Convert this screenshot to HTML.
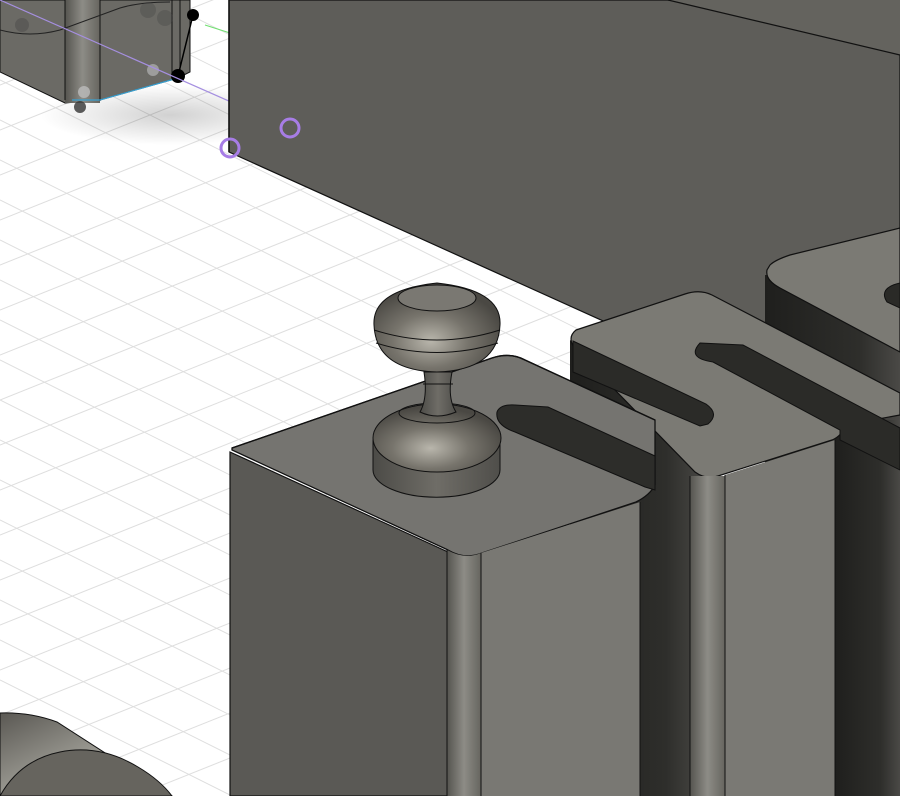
<!DOCTYPE html>
<html><head><meta charset="utf-8"><style>
html,body{margin:0;padding:0;background:#fff;width:900px;height:796px;overflow:hidden}
svg{display:block}
</style></head><body>
<svg width="900" height="796" viewBox="0 0 900 796" xmlns="http://www.w3.org/2000/svg">
<defs>
<linearGradient id="fil" x1="0" x2="1"><stop offset="0" stop-color="#55544f"/><stop offset=".5" stop-color="#8d8c86"/><stop offset="1" stop-color="#66655f"/></linearGradient>
<linearGradient id="dk" x1="0" x2="1"><stop offset="0" stop-color="#1f1f1d"/><stop offset=".7" stop-color="#2e2e2b"/><stop offset="1" stop-color="#4a4946"/></linearGradient>
<radialGradient id="ball" cx=".45" cy=".65" r=".6"><stop offset="0" stop-color="#b9b6ac"/><stop offset=".5" stop-color="#77746c"/><stop offset="1" stop-color="#4a4843"/></radialGradient>
<linearGradient id="cyl" x1="0" x2="1"><stop offset="0" stop-color="#4c4b47"/><stop offset=".5" stop-color="#6f6d67"/><stop offset="1" stop-color="#4f4e4a"/></linearGradient>
<linearGradient id="tube" x1="0" y1="0" x2="1" y2="1"><stop offset="0" stop-color="#5a5853"/><stop offset=".6" stop-color="#a7a69e"/><stop offset="1" stop-color="#66645e"/></linearGradient>
<radialGradient id="sh" cx=".5" cy=".5" r=".5"><stop offset="0" stop-color="#000" stop-opacity=".18"/><stop offset="1" stop-color="#000" stop-opacity="0"/></radialGradient>
</defs>
<rect width="900" height="796" fill="#fff"/>
<g stroke="#dedede" stroke-width="1">
<line x1="0" y1="-400" x2="900" y2="50"/><line x1="0" y1="-360" x2="900" y2="90"/><line x1="0" y1="-320" x2="900" y2="130"/><line x1="0" y1="-280" x2="900" y2="170"/><line x1="0" y1="-240" x2="900" y2="210"/><line x1="0" y1="-200" x2="900" y2="250"/><line x1="0" y1="-160" x2="900" y2="290"/><line x1="0" y1="-120" x2="900" y2="330"/><line x1="0" y1="-80" x2="900" y2="370"/><line x1="0" y1="-40" x2="900" y2="410"/><line x1="0" y1="0" x2="900" y2="450"/><line x1="0" y1="40" x2="900" y2="490"/><line x1="0" y1="80" x2="900" y2="530"/><line x1="0" y1="120" x2="900" y2="570"/><line x1="0" y1="160" x2="900" y2="610"/><line x1="0" y1="200" x2="900" y2="650"/><line x1="0" y1="240" x2="900" y2="690"/><line x1="0" y1="280" x2="900" y2="730"/><line x1="0" y1="320" x2="900" y2="770"/><line x1="0" y1="360" x2="900" y2="810"/><line x1="0" y1="400" x2="900" y2="850"/><line x1="0" y1="440" x2="900" y2="890"/><line x1="0" y1="480" x2="900" y2="930"/><line x1="0" y1="520" x2="900" y2="970"/><line x1="0" y1="560" x2="900" y2="1010"/><line x1="0" y1="600" x2="900" y2="1050"/><line x1="0" y1="640" x2="900" y2="1090"/><line x1="0" y1="680" x2="900" y2="1130"/><line x1="0" y1="720" x2="900" y2="1170"/><line x1="0" y1="760" x2="900" y2="1210"/>
<line x1="0" y1="40" x2="900" y2="-320"/><line x1="0" y1="85" x2="900" y2="-275"/><line x1="0" y1="130" x2="900" y2="-230"/><line x1="0" y1="175" x2="900" y2="-185"/><line x1="0" y1="220" x2="900" y2="-140"/><line x1="0" y1="265" x2="900" y2="-95"/><line x1="0" y1="310" x2="900" y2="-50"/><line x1="0" y1="355" x2="900" y2="-5"/><line x1="0" y1="400" x2="900" y2="40"/><line x1="0" y1="445" x2="900" y2="85"/><line x1="0" y1="490" x2="900" y2="130"/><line x1="0" y1="535" x2="900" y2="175"/><line x1="0" y1="580" x2="900" y2="220"/><line x1="0" y1="625" x2="900" y2="265"/><line x1="0" y1="670" x2="900" y2="310"/><line x1="0" y1="715" x2="900" y2="355"/><line x1="0" y1="760" x2="900" y2="400"/><line x1="0" y1="805" x2="900" y2="445"/><line x1="0" y1="850" x2="900" y2="490"/><line x1="0" y1="895" x2="900" y2="535"/><line x1="0" y1="940" x2="900" y2="580"/><line x1="0" y1="985" x2="900" y2="625"/><line x1="0" y1="1030" x2="900" y2="670"/><line x1="0" y1="1075" x2="900" y2="715"/><line x1="0" y1="1120" x2="900" y2="760"/><line x1="0" y1="1165" x2="900" y2="805"/>
</g>
<ellipse cx="170" cy="115" rx="130" ry="30" fill="url(#sh)"/>
<path d="M0 0 H190 V72 L178 78 L100 100 L65 103 L0 72 Z" fill="#6b6a65" stroke="#111" stroke-width="1"/>
<rect x="65" y="0" width="35" height="103" fill="url(#fil)"/>
<line x1="65" y1="0" x2="65" y2="100" stroke="#111"/><line x1="100" y1="0" x2="100" y2="101" stroke="#111"/>
<line x1="172" y1="0" x2="172" y2="78" stroke="#111"/><line x1="180" y1="0" x2="180" y2="76" stroke="#111"/>
<path d="M0 30 Q30 38 60 30 L120 8 Q140 2 170 2" fill="none" stroke="#222"/>
<path d="M72 100 L100 100 L178 78" fill="none" stroke="#3aa0d0" stroke-width="1.2"/>
<line x1="178" y1="76" x2="193" y2="15" stroke="#000" stroke-width="1.5"/>
<circle cx="178" cy="76" r="7" fill="#000"/><circle cx="193" cy="15" r="6" fill="#000"/>
<circle cx="153" cy="70" r="6" fill="#aaa" opacity=".8"/><circle cx="84" cy="92" r="6" fill="#bbb" opacity=".8"/>
<circle cx="80" cy="107" r="6" fill="#333" opacity=".8"/>
<circle cx="22" cy="25" r="7" fill="#444" opacity=".4"/><circle cx="148" cy="10" r="8" fill="#444" opacity=".35"/><circle cx="165" cy="18" r="8" fill="#444" opacity=".35"/>
<line x1="205" y1="25" x2="230" y2="33" stroke="#6fe06f"/>
<line x1="0" y1="0" x2="290" y2="128" stroke="#a58fe0" stroke-width="1.2"/>
<polygon points="229,0 900,0 900,455 229,152" fill="#5e5d59" stroke="#111" stroke-width="1.2"/>
<line x1="229" y1="0" x2="229" y2="152" stroke="#111" stroke-width="1.5"/>
<polygon points="668,0 900,0 900,55" fill="#64635e"/>
<line x1="668" y1="0" x2="900" y2="55" stroke="#111" stroke-width="1.2"/>
<circle cx="290" cy="128" r="9" fill="none" stroke="#a77de6" stroke-width="3"/>
<circle cx="230" cy="148" r="9" fill="none" stroke="#a77de6" stroke-width="3"/>
<polygon points="765,275 900,280 900,740 765,740" fill="url(#dk)"/>
<path d="M770,265 Q775,260 790,255 L900,228 V352 L780,288 Q765,280 767,270 Z" fill="#7b7a74" stroke="#111" stroke-width="1.2"/>
<path d="M900,283 Q878,288 887,302 L900,308 Z" fill="#2a2a27" stroke="#111"/>
<polygon points="840,740 900,740 900,796 870,796" fill="#fff"/>
<line x1="840" y1="790" x2="900" y2="765" stroke="#f08080"/>
<polygon points="570,340 707,477 707,796 570,796" fill="url(#dk)"/>
<rect x="835" y="420" width="65" height="376" fill="url(#dk)"/>
<path d="M576,330 L685,294 Q700,289 712,295 L900,393 V415 L845,425 Q842,436 832,440 L718,476 Q706,480 695,472 L576,350 Q566,338 576,330 Z" fill="#7b7a74" stroke="#111" stroke-width="1.2"/>
<path d="M573,341 L706,404 Q720,414 708,424 L700,426 L573,372 Z" fill="#2b2b28" stroke="#111"/>
<path d="M700,343 L743,345 L900,428 V470 L840,440 L840,430 L713,362 Q686,358 700,343 Z" fill="#2b2b28" stroke="#111"/>
<rect x="690" y="476" width="35" height="320" fill="url(#fil)"/>
<path d="M725,475 L835,440 V796 H725 Z" fill="#7a7974"/>
<line x1="835" y1="440" x2="835" y2="796" stroke="#111"/>
<line x1="725" y1="475" x2="725" y2="796" stroke="#111"/>
<line x1="690" y1="476" x2="690" y2="796" stroke="#111"/>
<path d="M232,448 L492,358 Q510,352 525,360 L655,420 L655,485 Q650,495 636,502 L482,553 Q465,560 448,550 L232,450 Z" fill="#757470" stroke="#111" stroke-width="1.3"/>
<path d="M497,412 Q500,404 515,405 L548,407 L655,456 V490 L645,487 L515,432 Q495,425 497,412 Z" fill="#2d2d2a" stroke="#111"/>
<path d="M232,448 L492,358 Q510,352 525,360 L655,420" fill="none" stroke="#111" stroke-width="1.3"/>
<path d="M230,452 L448,552 V796 H230 Z" fill="#5a5955" stroke="#111" stroke-width="1.2"/>
<path d="M447,550 Q465,560 481,553 V796 H447 Z" fill="url(#fil)"/>
<path d="M481,553 L640,502 V796 H481 Z" fill="#797873"/>
<line x1="447" y1="550" x2="447" y2="796" stroke="#111"/><line x1="481" y1="553" x2="481" y2="796" stroke="#111"/>
<line x1="640" y1="502" x2="640" y2="796" stroke="#111"/>
<path d="M373,440 V470 A63,27 0 0 0 500,470 V440 Z" fill="url(#cyl)" stroke="#111"/>
<ellipse cx="437" cy="438" rx="64" ry="34" fill="url(#ball)" stroke="#111"/>
<ellipse cx="437" cy="413" rx="38" ry="10" fill="none" stroke="#111"/>
<path d="M420,412 Q428,398 424,372 H452 Q447,398 456,412 Q437,420 420,412 Z" fill="url(#cyl)" stroke="#111"/>
<line x1="423" y1="384" x2="453" y2="384" stroke="#111"/>
<path d="M374,325 Q372,290 437,283 Q502,290 500,325 Q498,370 437,372 Q376,370 374,325 Z" fill="url(#ball)" stroke="#111"/>
<path d="M374,330 Q437,350 500,330" fill="none" stroke="#111"/>
<path d="M376,343 Q437,362 498,343" fill="none" stroke="#111"/>
<ellipse cx="437" cy="298" rx="39" ry="13" fill="#7a7872" stroke="#111"/>
<path d="M0,713 Q30,712 57,722 L172,796 H0 Z" fill="url(#tube)" stroke="#111"/>
<path d="M0,796 Q20,760 60,752 Q100,744 138,767 Q160,780 172,796 Z" fill="#66645e" stroke="#111"/>
</svg>
</body></html>
